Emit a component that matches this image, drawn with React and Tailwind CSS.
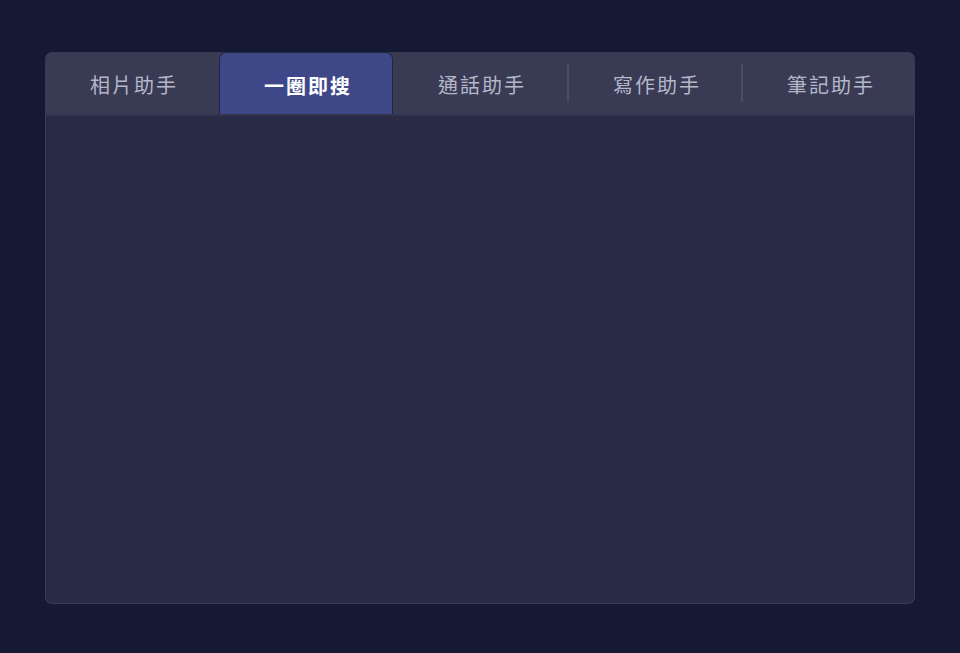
import React, { useState } from "react";

const TABS = ["相片助手", "一圈即搜", "通話助手", "寫作助手", "筆記助手"];

export default function App() {
  const [active, setActive] = useState(1);

  return (
    <div
      className="h-[653px] w-full bg-[#161934] pl-[45px] pt-[52px]"
      style={{ fontFamily: '"Noto Sans CJK TC", "Noto Sans", sans-serif' }}
    >
      <div className="flex h-[552px] w-[870px] flex-col">
        <div className="flex h-[62px] rounded-t-[7px] bg-[#393b55]">
          {TABS.map((label, i) => {
            const isActive = i === active;
            const showDivider = i > 0 && i !== active && i - 1 !== active;
            return (
              <div key={label} className="flex flex-1 items-stretch">
                {showDivider && <div className="my-[12px] w-[2px] bg-[#4a4c66]" />}
                <button
                  type="button"
                  onClick={() => setActive(i)}
                  className={
                    isActive
                      ? "flex flex-1 items-center justify-center rounded-t-[7px] border-x border-t border-[#22253f] bg-[#3e4888] pl-[4px] pt-[4px] text-[20px] font-bold tracking-[2px] text-white"
                      : "flex flex-1 items-center justify-center pl-[4px] pt-[4px] text-[20px] tracking-[2px] text-[#b5b7c8]"
                  }
                >
                  {label}
                </button>
              </div>
            );
          })}
        </div>
        <div className="flex-1 rounded-b-[7px] border border-t-2 border-[#3b3e58] border-t-[#33354f] bg-[#292b46]" />
      </div>
    </div>
  );
}
